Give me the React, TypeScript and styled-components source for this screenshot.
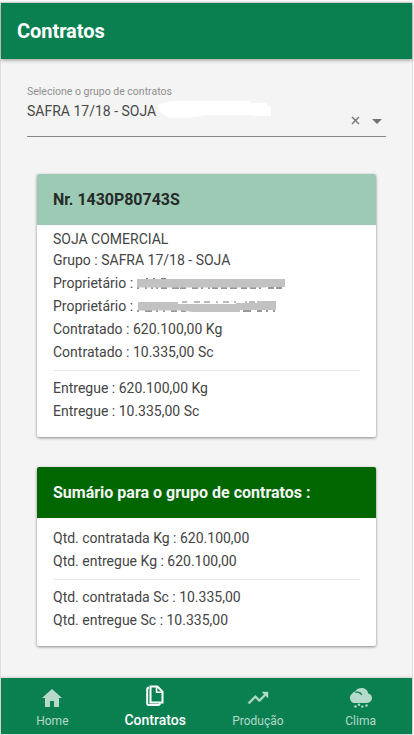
import React from "react";
import styled, { createGlobalStyle } from "styled-components";

const GlobalStyle = createGlobalStyle`
  * { box-sizing: border-box; }
  body { margin: 0; background: #f4f4f4; font-family: Roboto, "Liberation Sans", sans-serif; }
`;

const Screen = styled.div`
  width: 414px;
  height: 735px;
  padding: 2px 1px 0 0;
  background: #fafafa;
`;

const Frame = styled.div`
  width: 413px;
  height: 733px;
  border: 1px solid #dedede;
  background: #f4f4f4;
  display: flex;
  flex-direction: column;
`;

const Header = styled.header`
  flex: none;
  height: 56px;
  padding: 0 16px;
  display: flex;
  align-items: center;
  background: #0a8051;
  color: #fff;
  box-shadow: 0 1px 4px rgba(0, 0, 0, 0.4);
`;

const Title = styled.h1`
  margin: 0;
  font-size: 20px;
  font-weight: 700;
  line-height: 24px;
  letter-spacing: -0.05px;
`;

const Content = styled.main`
  flex: 1;
  min-height: 0;
  padding: 24px 26px 0;
`;

const Field = styled.div`
  height: 54px;
  border-bottom: 1px solid #888;
  display: grid;
  grid-template-columns: 1fr auto;
`;

const Label = styled.div`
  padding-top: 1px;
  font-size: 10.5px;
  line-height: 15px;
  color: #8f8f8f;
`;

const ValueRow = styled.div`
  display: flex;
  height: 22px;
`;

const Value = styled.div`
  width: 129px;
  font-size: 14px;
  line-height: 24px;
  color: #484848;
  white-space: nowrap;
`;

const Controls = styled.div`
  display: flex;
  align-self: end;
  align-items: center;
  gap: 12px;
  height: 32px;
  padding-right: 4px;
`;

const Cards = styled.div`
  display: flex;
  flex-direction: column;
  gap: 30px;
  padding: 37px 10px 0;
`;

const Card = styled.section<{ $height: number }>`
  width: 339px;
  height: ${(p) => p.$height}px;
  border-radius: 2px;
  overflow: hidden;
  background: #fff;
  box-shadow: 0 1px 3px rgba(0, 0, 0, 0.45);
`;

const CardHeader = styled.h2<{ $dark?: boolean }>`
  margin: 0;
  height: 51px;
  padding: 0 16px;
  font-size: 16px;
  font-weight: 700;
  line-height: 51px;
  letter-spacing: ${(p) => (p.$dark ? "0" : "-0.04px")};
  color: ${(p) => (p.$dark ? "#f4f4f4" : "#262b29")};
  background: ${(p) => (p.$dark ? "#006600" : "#9dcab4")};
`;

const CardBody = styled.div<{ $top: number }>`
  padding: ${(p) => p.$top}px 16px 0;
`;

const Line = styled.div<{ $short?: boolean }>`
  display: flex;
  height: ${(p) => (p.$short ? 21 : 23)}px;
  font-size: 14px;
  line-height: 23px;
  color: #444;
  white-space: pre;
`;

const Divider = styled.hr`
  margin: 6px 0;
  height: 1px;
  border: 0;
  background: #e6e6e6;
`;

const Tabs = styled.nav`
  flex: none;
  height: 56px;
  display: grid;
  grid-template-columns: repeat(4, 1fr);
  background: #0a8051;
  box-shadow: 0 -1px 2px rgba(0, 0, 0, 0.15);
`;

const Tab = styled.a<{ $active?: boolean }>`
  display: flex;
  flex-direction: column;
  align-items: center;
  padding-top: ${(p) => (p.$active ? 6 : 8)}px;
  gap: ${(p) => (p.$active ? 3 : 2)}px;
  color: ${(p) => (p.$active ? "#fff" : "#b5d9cb")};
  font-size: ${(p) => (p.$active ? 14 : 12)}px;
  font-weight: ${(p) => (p.$active ? 500 : 400)};
  line-height: 18px;
  svg { display: block; }
`;

const ValueCover = () => (
  <svg width="116" height="22" viewBox="0 0 116 22">
    <path fill="#fff" d="M2 5L16 2H94L95 4H110L115 9V17H98L92 16H48L43 17L32 19H14L7 15L2 12Z" />
  </svg>
);

const OwnerCover = () => (
  <svg width="152" height="23" viewBox="1 0 152 23">
    <path stroke="#777" d="M10 6.5h2M17 6.5h2M25 6.5h5" />
    <path stroke="#777" strokeWidth="1.3" d="M1 16h2M9 16h2M15 16h2M20 16h2M25 16h6M36 16h7M44 16h6M56 16h6M65 16h2M72 16h2M76 16h6M85 16h6M94 16h7M105 16h6M114 16h6M123 16h2M132 16h6M140 16h6" />
    <path fill="#c2c2c2" d="M1 7H149V15H130V15.5H1Z" />
  </svg>
);

const CompanyCover = () => (
  <svg width="152" height="23" viewBox="1 0 152 23">
    <path stroke="#777" d="M46 7h5M58 7h6M68 7h6M80 7h2M87 7h6M98 7h2M109 7h2M113 7h6" />
    <path stroke="#777" strokeWidth="1.3" d="M1 16h2M9 16h7M20 16h2M27 16h2M35 16h6M45 16h5M107 16h8M121 16h5M130 16h2M137 16h2" />
    <path fill="#c2c2c2" d="M2 7H42V9H100V8H121V6H140V15H104V17H57L45 15.5H2Z" />
  </svg>
);

const ClearIcon = () => (
  <svg width="9" height="9" viewBox="0 0 9 9" stroke="#737373" strokeWidth="1.4">
    <path d="M1 1L8 8M8 1L1 8" />
  </svg>
);

const ArrowIcon = () => (
  <svg width="10" height="7" viewBox="0 0 10 7">
    <path d="M0 2H10L5 7Z" fill="#737373" />
  </svg>
);

const HomeIcon = () => (
  <svg width="24" height="24" viewBox="0 0 24 24" fill="currentColor">
    <path d="M10 21V15H14V21H19V12H22L12 3L2 12H5V21Z" />
  </svg>
);

const DocsIcon = () => (
  <svg width="24" height="24" viewBox="0 0 24 24" fill="none" stroke="currentColor">
    <path strokeWidth="2" d="M7.5 2.5H14.4L19.5 7.6V18.5H7.5Z" />
    <path strokeWidth="2" d="M6 3.5Q4.2 3.7 4.2 5V19.3Q4.2 20.9 5.6 20.9H15.5Q16.8 20.9 17.2 19.3" />
    <path strokeWidth="1.6" d="M13.6 3V8.2H19.2" />
  </svg>
);

const TrendIcon = () => (
  <svg width="24" height="24" viewBox="0 0 24 24" fill="currentColor" stroke="currentColor" strokeWidth="0.4">
    <path d="M16 6l2.3 2.3-4.9 4.9-4-4L2 16.6 3.4 18l6-6 4 4 6.3-6.3L22 12V6z" />
  </svg>
);

const RainIcon = () => (
  <svg width="24" height="24" viewBox="0 0 24 24" fill="currentColor">
    <path d="M6.5 17A5.2 5.2 0 0 1 3 7.7Q4 6 6 5.8C7.5 2.9 10 2 12.5 2c4 0 6.4 2.5 6.8 5.5C22 8 23 10 23 12a5 5 0 0 1-5 5Z" />
    <path d="M6.5 6.4Q10.7 5.1 12.8 9" fill="none" stroke="#0a8051" strokeWidth="1.2" />
    <circle cx="6.5" cy="20.5" r="1.2" /><circle cx="10" cy="18.8" r="1.2" />
    <circle cx="13.3" cy="20.6" r="1.2" /><circle cx="17.5" cy="19.5" r="1.2" />
  </svg>
);

const tabs = [
  { label: "Home", Icon: HomeIcon },
  { label: "Contratos", Icon: DocsIcon, active: true },
  { label: "Produção", Icon: TrendIcon },
  { label: "Clima", Icon: RainIcon },
];

export default function App() {
  return (
    <Screen>
      <GlobalStyle />
      <Frame>
        <Header><Title>Contratos</Title></Header>
        <Content>
          <Field>
            <div>
              <Label>Selecione o grupo de contratos</Label>
              <ValueRow><Value>SAFRA 17/18 - SOJA</Value><ValueCover /></ValueRow>
            </div>
            <Controls><ClearIcon /><ArrowIcon /></Controls>
          </Field>
          <Cards>
            <Card $height={263}>
              <CardHeader>Nr. 1430P80743S</CardHeader>
              <CardBody $top={3}>
                <Line $short>SOJA COMERCIAL</Line>
                <Line>Grupo : SAFRA 17/18 - SOJA</Line>
                <Line>Proprietário : <OwnerCover /></Line>
                <Line>Proprietário : <CompanyCover /></Line>
                <Line>Contratado : 620.100,00 Kg</Line>
                <Line>Contratado : 10.335,00 Sc</Line>
                <Divider />
                <Line>Entregue : 620.100,00 Kg</Line>
                <Line>Entregue : 10.335,00 Sc</Line>
              </CardBody>
            </Card>
            <Card $height={179}>
              <CardHeader $dark>Sumário para o grupo de contratos :</CardHeader>
              <CardBody $top={9}>
                <Line>Qtd. contratada Kg : 620.100,00</Line>
                <Line>Qtd. entregue Kg : 620.100,00</Line>
                <Divider />
                <Line>Qtd. contratada Sc : 10.335,00</Line>
                <Line>Qtd. entregue Sc : 10.335,00</Line>
              </CardBody>
            </Card>
          </Cards>
        </Content>
        <Tabs>
          {tabs.map(({ label, Icon, active }) => (
            <Tab key={label} $active={active}><Icon />{label}</Tab>
          ))}
        </Tabs>
      </Frame>
    </Screen>
  );
}
